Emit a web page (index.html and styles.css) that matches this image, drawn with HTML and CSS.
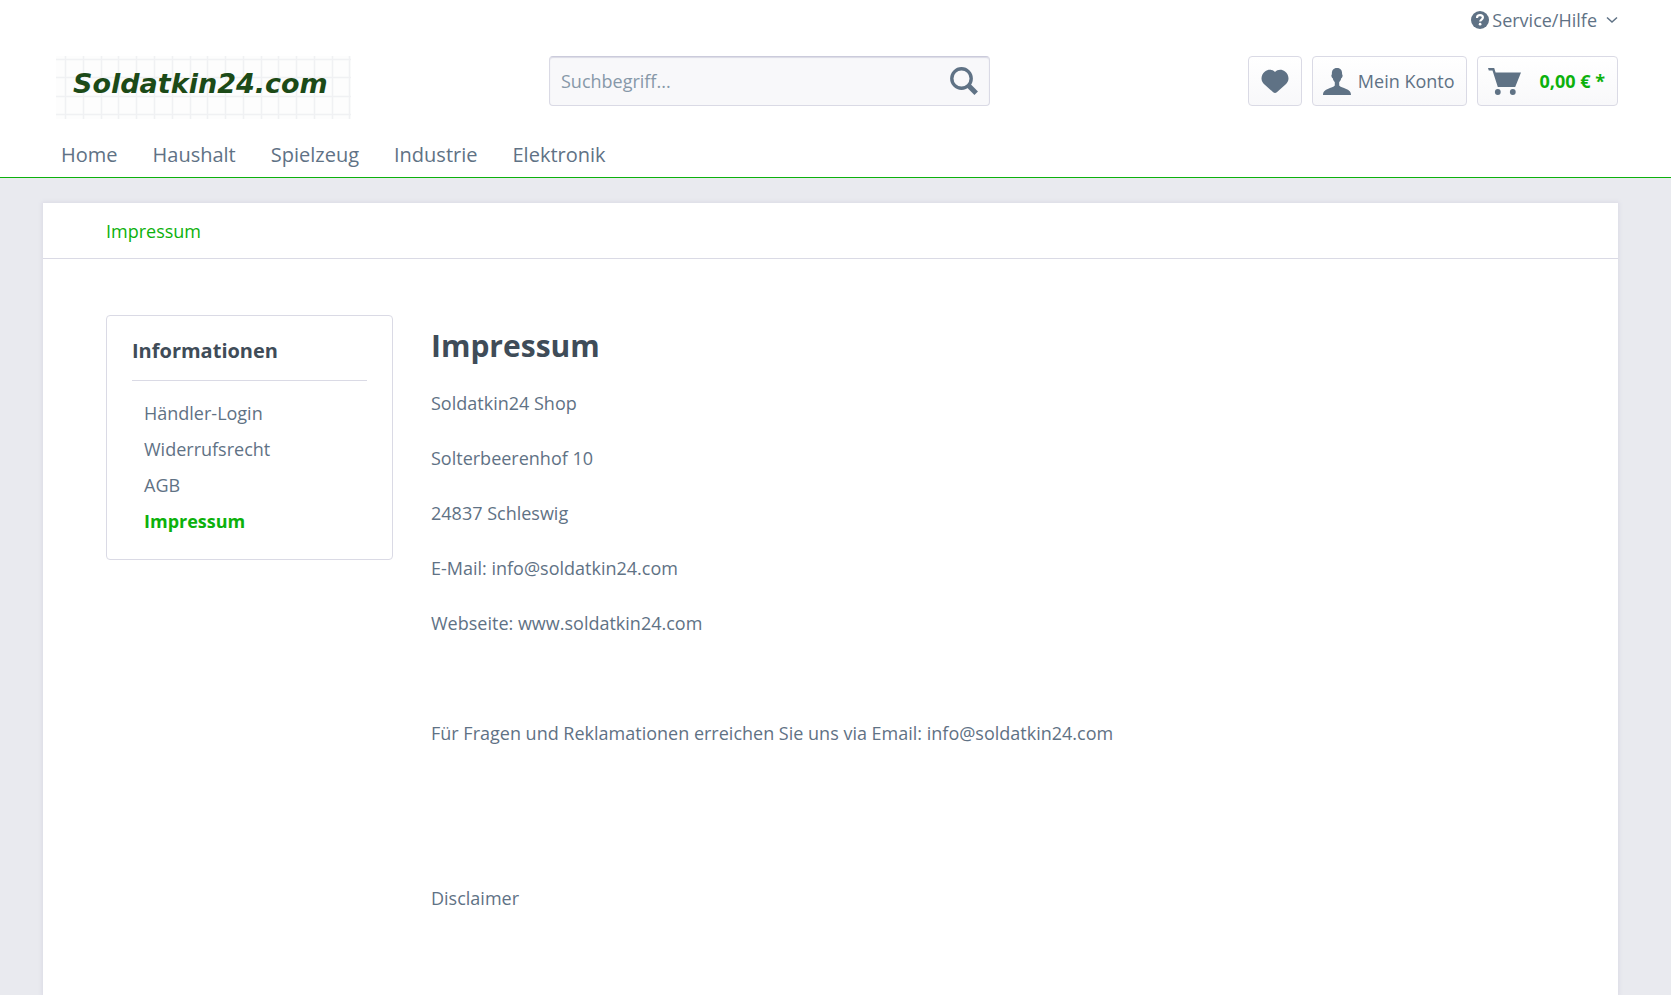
FILE: index.html
```html
<!DOCTYPE html>
<html lang="de">
<head>
<meta charset="utf-8">
<meta name="viewport" content="width=device-width, initial-scale=1">
<title>Impressum | Soldatkin24.com</title>
<link rel="stylesheet" href="styles.css">
</head>
<body>
<header class="header">
  <div class="topbar">
    <button class="service" type="button">
      <svg class="icon-help" viewBox="0 0 18 18" aria-hidden="true"><circle cx="9" cy="9" r="9" fill="currentColor"/><path d="M6.100 7V6.300C6.100 4.900 7.300 4.200 9 4.200s2.900.8 2.900 2.400c0 2-2.700 1.900-2.700 4" fill="none" stroke="#fff" stroke-width="2.200"/><circle cx="9.100" cy="13.200" r="1.350" fill="#fff"/></svg>
      <span>Service/Hilfe</span>
      <svg class="icon-caret" viewBox="0 0 12 8" aria-hidden="true"><path d="M1 1.500l5 4.500 5-4.500" fill="none" stroke="currentColor" stroke-width="1.500"/></svg>
    </button>
  </div>
  <div class="masthead">
    <a class="logo" href="#" aria-label="Soldatkin24.com">
      <svg class="logo-art" viewBox="0 0 295 63">
        <rect width="295" height="63" fill="#fdfdfd"/>
        <path d="M9.500 0v63M27.500 0v63M45.500 0v63M62.500 0v63M80.500 0v63M98.500 0v63M116.500 0v63M134.500 0v63M151.500 0v63M169.500 0v63M187.500 0v63M205.500 0v63M222.500 0v63M240.500 0v63M258.500 0v63M276.500 0v63M293.500 0v63M0 3.500h295M0 21.500h295M0 40.500h295M0 58.500h295" stroke="#f0f1f3" stroke-width="1.500" fill="none"/>
        <text class="logo-text" x="17" y="37">Soldatkin24.com</text>
      </svg>
    </a>
    <form class="search" role="search">
      <input class="search-field" type="search" placeholder="Suchbegriff..." aria-label="Suchbegriff">
      <button class="search-button" type="button" aria-label="Suchen">
        <svg class="icon-search" viewBox="0 0 28 28" aria-hidden="true"><circle cx="11.500" cy="11.500" r="9.700" fill="none" stroke="currentColor" stroke-width="3.400"/><path d="M18 18l8.200 8.200" stroke="currentColor" stroke-width="5"/></svg>
      </button>
    </form>
    <nav class="actions" aria-label="Shop">
      <a class="action action-wish" href="#" aria-label="Merkzettel">
        <svg class="icon-heart" viewBox="0 0 28 24" aria-hidden="true"><path d="M14 3C11.500.2 7 .1 4 2.400 1.500 4.300.5 7 .5 9.500c0 2.500 1.200 4.300 3 6l8.700 7.700c1.100 1 2.500 1 3.600 0l8.700-7.700c1.800-1.700 3-3.500 3-6 0-2.500-1-5.200-3.500-7.100C21 .1 16.500.2 14 3z" fill="currentColor"/></svg>
      </a>
      <a class="action action-account" href="#">
        <svg class="icon-user" viewBox="0 0 28 27" aria-hidden="true"><path d="M14 0c-3.700 0-5.300 2.600-5.100 6 0 .7-.7.800-.5 2 .2 1.300.8 2 1.400 2.300.3 1.700 1 2.900 2 3.900v3.300c-.8 1.500-4.200 2.200-7 3.500C1.500 22.600.2 23.500 0 27h28c-.2-3.500-1.500-4.400-4.800-6-2.800-1.300-6.200-2-7-3.500v-3.300c1-1 1.700-2.200 2-3.900.6-.3 1.200-1 1.400-2.300.2-1.200-.5-1.300-.5-2 .2-3.400-1.400-6-5.100-6z" fill="currentColor"/></svg>
        <span>Mein Konto</span>
      </a>
      <a class="action action-cart" href="#">
        <svg class="icon-cart" viewBox="0 0 33 27" aria-hidden="true"><path d="M0 0h6.200l1.400 4.500H33L27.200 19H9.800L4.500 2.600H.800z" fill="currentColor"/><circle cx="9.800" cy="24" r="2.900" fill="currentColor"/><circle cx="24.800" cy="24" r="2.900" fill="currentColor"/></svg>
        <span class="amount">0,00&nbsp;€ *</span>
      </a>
    </nav>
  </div>
  <nav class="mainnav" aria-label="Kategorien">
    <a href="#">Home</a>
    <a href="#">Haushalt</a>
    <a href="#">Spielzeug</a>
    <a href="#">Industrie</a>
    <a href="#">Elektronik</a>
  </nav>
</header>
<div class="page">
  <nav class="breadcrumb" aria-label="Brotkrumen"><a href="#">Impressum</a></nav>
  <div class="columns">
    <aside class="sidebar">
      <h2 class="sidebar-title">Informationen</h2>
      <ul class="sidebar-list">
        <li><a href="#">Händler-Login</a></li>
        <li><a href="#">Widerrufsrecht</a></li>
        <li><a href="#">AGB</a></li>
        <li><a class="active" href="#" aria-current="page">Impressum</a></li>
      </ul>
    </aside>
    <main class="content">
      <h1>Impressum</h1>
      <p>Soldatkin24 Shop</p>
      <p>Solterbeerenhof 10</p>
      <p>24837 Schleswig</p>
      <p>E-Mail: info@soldatkin24.com</p>
      <p>Webseite: www.soldatkin24.com</p>
      <p>&nbsp;</p>
      <p>Für Fragen und Reklamationen erreichen Sie uns via Email: info@soldatkin24.com</p>
      <p>&nbsp;</p>
      <p>&nbsp;</p>
      <p>Disclaimer</p>
    </main>
  </div>
</div>
</body>
</html>
```

FILE: styles.css
```css
* { box-sizing: border-box; }

body {
  display: flex;
  flex-direction: column;
  min-height: 100vh;
  margin: 0;
  background: #e9eaef;
  color: #5f7285;
  font-family: "Open Sans", "Noto Sans", sans-serif;
  font-size: 18px;
  line-height: 30px;
}

a { color: inherit; text-decoration: none; }
svg { display: block; flex: none; }
button, input { font: inherit; color: inherit; }

.header {
  padding: 0 53px 0 56px;
  background: #fff;
  border-bottom: 1px solid #0cb10c;
}

.topbar {
  display: flex;
  justify-content: flex-end;
  padding: 5px 0 21px;
}
.service {
  display: flex;
  align-items: center;
  gap: 3px;
  padding: 0;
  border: 0;
  background: none;
}
.icon-help { width: 18px; height: 18px; }
.icon-caret { width: 12px; height: 8px; margin-left: 6px; }

.masthead {
  display: grid;
  grid-template-columns: 493fr 441fr 628fr;
  align-items: start;
}
.logo-art { width: 295px; height: 63px; }
.logo-text {
  fill: #1c4a17;
  font-family: "DejaVu Sans", sans-serif;
  font-size: 27px;
  font-style: italic;
  font-weight: 700;
}

.search {
  display: flex;
  height: 50px;
  border: 1px solid #dadae5;
  border-top-color: #cbcbdb;
  border-radius: 4px;
  background: #f8f8fa;
  box-shadow: inset 0 1px 1px #dadae5;
}
.search-field {
  flex: 1;
  min-width: 0;
  padding: 0 11px;
  border: 0;
  background: none;
  appearance: none;
}
.search-field::placeholder { color: #8798a9; opacity: 1; }
.search-button {
  display: flex;
  align-items: center;
  padding: 0 11px;
  border: 0;
  background: none;
}
.icon-search { width: 28px; height: 28px; }

.actions {
  display: flex;
  justify-content: flex-end;
  gap: 10px;
}
.action {
  display: flex;
  align-items: center;
  height: 50px;
  border: 1px solid #dadae5;
  border-radius: 4px;
  background: linear-gradient(#fff, #f8f8fa);
  white-space: nowrap;
}
.action-wish { padding: 0 12px; }
.action-account { gap: 7px; padding: 0 11px 0 10px; }
.action-cart { gap: 19px; padding: 0 12px 0 10px; }
.icon-heart { width: 28px; height: 24px; }
.icon-user { width: 28px; height: 27px; }
.icon-cart { width: 33px; height: 27px; }
.amount { color: #0cb10c; font-weight: 700; }

.mainnav {
  display: flex;
  gap: 35px;
  padding: 21px 5px 7px;
  font-size: 20px;
}

.page {
  flex: 1;
  margin: 25px 53px 0 43px;
  background: #fff;
  box-shadow: 0 0 4px 1px #dadae5;
}
.breadcrumb {
  padding: 13px 63px 12px;
  border-bottom: 1px solid #dadae5;
  color: #0cb10c;
}
.columns {
  display: flex;
  align-items: flex-start;
  gap: 38px;
  padding: 56px 63px 0;
}
.sidebar {
  flex: 0 0 287px;
  padding: 20px 25px;
  border: 1px solid #dadae5;
  border-radius: 4px;
}
.sidebar-title {
  margin: 0;
  padding-bottom: 14px;
  border-bottom: 1px solid #dadae5;
  color: #3f4c58;
  font-size: 20px;
}
.sidebar-list {
  margin: 0;
  padding: 14px 12px 0;
  list-style: none;
  line-height: 36px;
}
.active { color: #0cb10c; font-weight: 700; }

.content { flex: 1; min-width: 0; }
.content h1 {
  margin: 11px 0 22px;
  color: #3f4c58;
  font-size: 30px;
  line-height: 40px;
}
.content p { margin: 0 0 25px; }
```
